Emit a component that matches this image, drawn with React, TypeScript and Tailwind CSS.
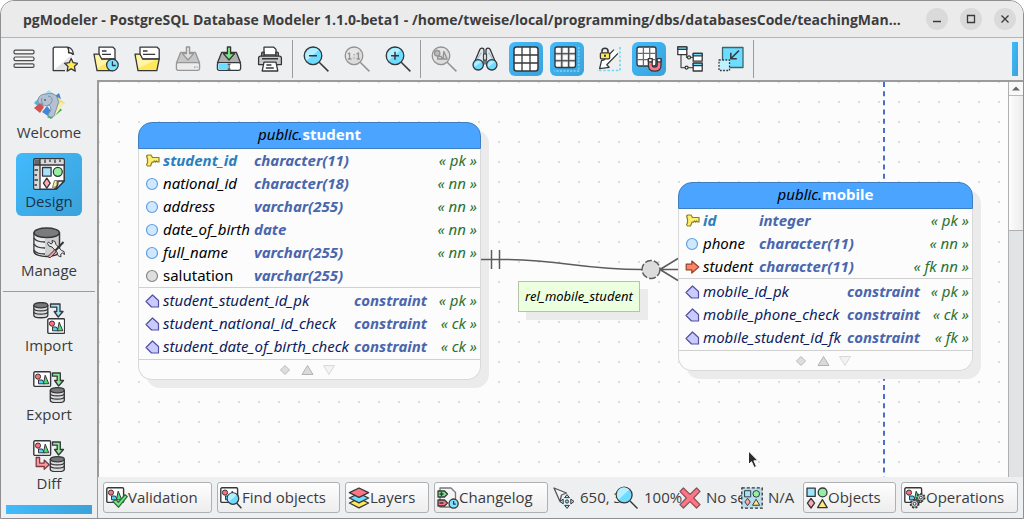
import type { ReactNode } from "react";

const INK = "#35373a";

function Icon({ size, children, className = "" }: { size: number; children: ReactNode; className?: string }) {
  return (
    <svg
      aria-hidden="true"
      width={size}
      height={size}
      viewBox={`0 0 ${size} ${size}`}
      fill="none"
      stroke={INK}
      strokeWidth="1.3"
      strokeLinejoin="round"
      className={`shrink-0 ${className}`}
    >
      {children}
    </svg>
  );
}

/* ---------- shared drawing pieces ---------- */

function ModelCard() {
  return (
    <g>
      <rect x="0.8" y="0.8" width="16.8" height="14.6" rx="1.2" fill="#fff" strokeWidth="1.4" />
      <path d="M5.5 12.8V9h3.8l2.2 3.8z" fill="#4fd2ff" strokeWidth="1" />
      <path d="M10.4 12.8l1.8-8.6 3.6 8.6z" fill="#4be07a" strokeWidth="1" />
      <circle cx="5" cy="5.6" r="2.6" fill="#ff6f7d" strokeWidth="1" />
    </g>
  );
}

function SmallDb() {
  return (
    <g strokeWidth="1.3">
      <path d="M0.8 3v10.2c0 3.4 14 3.4 14 0V3" fill="#dcdcdc" />
      <path d="M0.8 6.4c0 3.2 14 3.2 14 0M0.8 9.8c0 3.2 14 3.2 14 0" />
      <ellipse cx="7.8" cy="3.2" rx="7" ry="2.6" fill="#777" />
    </g>
  );
}

function Gear({ cx, cy, r }: { cx: number; cy: number; r: number }) {
  return (
    <g>
      <circle cx={cx} cy={cy} r={r} fill="#d6d6d6" strokeWidth="2.2" strokeDasharray="1.8 1.4" />
      <circle cx={cx} cy={cy} r={r - 0.4} fill="#d6d6d6" strokeWidth="0.8" />
      <circle cx={cx} cy={cy} r="1.4" fill="#fff" strokeWidth="1" />
    </g>
  );
}

function Lens({ children, muted = false }: { children?: ReactNode; muted?: boolean }) {
  return (
    <g stroke={muted ? "#939393" : INK}>
      <path d="M16.2 16.2L25.4 25.4" strokeWidth="1.5" />
      <circle cx="10" cy="9.8" r="8.8" fill={muted ? "#dcdcdc" : "#6fdcff"} strokeWidth="1.3" />
      <path d="M3.8 14.6A8 8 0 0 1 15.6 4z" fill={muted ? "#e6e6e6" : "#b5efff"} stroke="none" />
      {children}
    </g>
  );
}

function Clock({ cx, cy, r }: { cx: number; cy: number; r: number }) {
  return (
    <g>
      <circle cx={cx} cy={cy} r={r} fill="#80e2ff" strokeWidth="1.3" />
      <path d={`M${cx} ${cy - r + 2}V${cy + 0.5}H${cx + r - 2.4}`} strokeWidth="1.3" />
    </g>
  );
}

function FolderShape({ right }: { right: number }) {
  return (
    <g>
      <path d={`M6 13V1.2h${right - 8}l2 2V13z`} fill="#fff" />
      <path d={`M9 5h4.500M9 8.400h${right - 13}`} />
      <path d={`M4 24.600L1 8.200h5.200l2.600 5H${right}L${right - 2.4} 24.600z`} fill="#ffe85a" />
      <path d={`M4.600 22L2.200 9.200h3.400l2.600 5H${right - 4}z`} fill="#fff4ae" stroke="none" />
    </g>
  );
}

function Drive({ muted = false }: { muted?: boolean }) {
  return (
    <g stroke={muted ? "#979797" : INK}>
      <path d="M1.4 17L5.6 6.4h14.8L24.6 17z" fill={muted ? "#c6c6c6" : "#b0b0b0"} />
      <rect x="1.4" y="16.6" width="23.2" height="7.8" rx="1.8" fill={muted ? "#ececec" : "#fff"} />
      {muted ? (
        <path d="M19 21.2h1.4M21.6 21.2h1" />
      ) : (
        <g>
          <path d="M2.4 18h10v5.4h-10z" fill="#6fdcff" stroke="none" />
          <path d="M11.6 18.2h3M13.1 18.2v5M11.6 23.2h3" strokeWidth="1" />
        </g>
      )}
      <path d="M11.4 1h3.2v6.600h4L13 14 7.400 7.600h4z" fill={muted ? "#dedede" : "#7ce07c"} />
    </g>
  );
}

/* ---------- toolbar icons ---------- */

const menuIcon = (
  <Icon size={26}>
    {[4.2, 11, 17.8].map((y) => (
      <rect key={y} x="3" y={y} width="20" height="3.6" rx="1.4" fill="#f4f4f4" stroke="#4a4a4a" strokeWidth="1.2" />
    ))}
  </Icon>
);

const newIcon = (
  <Icon size={26}>
    <path d="M1 1.2h14.500q6 1.300 6.300 8.400v15.200H1z" fill="#fff" stroke="none" />
    <path d="M2 24L20.500 8v16z" fill="#e3e5e8" stroke="none" />
    <path d="M21.600 8.800Q20.800 2 15.500 1.200H2.200L1.200 2.200V24.600H13M15.500 1.200q2 3.400 1 5.600 3-.4 5 2" />
    <path d="M19.200 12.500l2 4.200 4.600.6-3.400 3.200.9 4.600-4.100-2.200-4.100 2.200.9-4.600-3.400-3.200 4.600-.6z" fill="#ffe85a" />
  </Icon>
);

const recentIcon = (
  <Icon size={26}>
    <FolderShape right={22} />
    <Clock cx={19.4} cy={19} r={5.8} />
  </Icon>
);

const openIcon = (
  <Icon size={26}>
    <FolderShape right={25.2} />
  </Icon>
);

const saveIcon = (
  <Icon size={26}>
    <Drive muted />
  </Icon>
);

const saveAsIcon = (
  <Icon size={26}>
    <Drive />
  </Icon>
);

const printIcon = (
  <Icon size={26}>
    <path d="M7 9V1.200h9.800L19 3.400V9z" fill="#fff" />
    <path d="M4.600 11.400V7.400q0-1.200 1.200-1.200h1.200v5.200M19 11.400V6.200h1.200q1.200 0 1.200 1.200v4" fill="#999" />
    <path d="M1.600 18.600v-6.400q0-2 2-2h18.800q2 0 2 2v6.400z" fill="#c9c9c9" />
    <path d="M5 12.800h16" strokeWidth="1.6" />
    <path d="M7 16.200h12l1.800 8.800H5.200z" fill="#fff" />
    <path d="M9.400 19h5M8.800 22h8" />
  </Icon>
);

const zoomOutIcon = (
  <Icon size={26}>
    <Lens>
      <path d="M6 9.800h8" strokeWidth="1.5" />
    </Lens>
  </Icon>
);

const zoomResetIcon = (
  <Icon size={26}>
    <Lens muted>
      <path d="M3.800 8l1.800-1v6M3.800 13h3.600M12.600 8l1.800-1v6M12.600 13h3.400M10 8.300v1M10 11.600v1" />
    </Lens>
  </Icon>
);

const zoomInIcon = (
  <Icon size={26}>
    <Lens>
      <path d="M6 9.800h8M10 5.800v8" strokeWidth="1.5" />
    </Lens>
  </Icon>
);

const zoomObjectsIcon = (
  <Icon size={26}>
    <Lens muted>
      <circle cx="6.2" cy="7.2" r="2.7" fill="#bdbdbd" />
      <path d="M6.600 13V10.400h3.400l1.600 2.600zM12 13l.8-7.600 3.400 7.600z" fill="#d2d2d2" />
    </Lens>
  </Icon>
);

const binocularsIcon = (
  <Icon size={26}>
    <path d="M2 17.500L7.400 4.600q.6-2.400 2.600-2.400 2 0 2 2.400v14M24 17.500L18.600 4.600q-.6-2.400-2.600-2.400-2 0-2 2.400v14" fill="#dfeaee" />
    <path d="M11.400 8h3.200v6h-3.200z" fill="#cfdde2" strokeWidth="1" />
    <path d="M4.500 14l5-7.500M21.500 14l-5-7.500" stroke="#aebbc0" />
    <circle cx="6.2" cy="18.8" r="5.2" fill="#6fdcff" />
    <circle cx="19.8" cy="18.8" r="5.2" fill="#6fdcff" />
    <path d="M2.600 21a4.300 4.300 0 0 1 6.600-5zM16.200 21a4.300 4.300 0 0 1 6.600-5z" fill="#b5efff" stroke="none" />
  </Icon>
);

const gridIcon = (
  <Icon size={26}>
    <rect x="1" y="1" width="24" height="24" rx="2.5" fill="#fff" strokeWidth="1.5" />
    <path d="M9 1v24M17 1v24M1 9h24M1 17h24" />
  </Icon>
);

const pageLimitsIcon = (
  <Icon size={26}>
    <rect x="1" y="1" width="20.5" height="20.5" rx="2" fill="#fff" stroke="none" />
    <path d="M7.800 1v20.500M14.700 1v20.500M1 7.800h20.500M1 14.700h20.500" stroke="#d0d0d0" strokeWidth="3" />
    <path d="M7.800 1v20.500M14.700 1v20.500M1 7.800h20.500M1 14.700h20.500" strokeWidth="1.1" />
    <rect x="1" y="1" width="20.5" height="20.5" rx="2" strokeWidth="1.4" />
    <path d="M24.800 1v24H.5" stroke="#7fd6fb" strokeDasharray="2 1.4" />
  </Icon>
);

const lockLimitsIcon = (
  <Icon size={26}>
    <path d="M25 1v23.500H2" stroke="#70d6f5" strokeWidth="1.6" strokeDasharray="2.4 1.8" />
    <path d="M19 3.600L8.800 14l-2.200.4-2 8.200 9.600-1.200-2.400-2.600L23 7.400" fill="#fff" />
    <path d="M7 7.400V5q0-2.800 3-2.800T13 5v2.400" strokeWidth="1.6" />
    <rect x="5.4" y="6.8" width="9.2" height="6" rx="1" fill="#ffe85a" />
    <path d="M9 8.800h2v2H9z" fill={INK} stroke="none" />
  </Icon>
);

const snapIcon = (
  <Icon size={26}>
    <rect x="1" y="1" width="19" height="19" rx="2" fill="#fff" strokeWidth="1.4" />
    <path d="M7.400 1v19M13.700 1v19M1 7.400h19M1 13.700h19" stroke="#6b6b6b" />
    <path d="M12.400 13v6.200q0 6 6.300 6t6.300-6V13h-3.800v5.800q0 2.400-2.500 2.400t-2.500-2.400V13z" fill="#ff7583" />
    <path d="M12.400 12.600h3.800v3.200h-3.800zM21.200 12.600H25v3.200h-3.800z" fill="#fff" />
  </Icon>
);

const treeIcon = (
  <Icon size={26}>
    <path d="M4 8v13.600h12M9.600 7v4.400H16" stroke="#555" />
    <circle cx="12" cy="11.4" r="1.5" fill="#fff" />
    <circle cx="9.6" cy="21.6" r="1.5" fill="#fff" />
    {[
      [0.8, 0.9],
      [16.2, 7.4],
      [16.2, 17.2],
    ].map(([x, y]) => (
      <g key={`${x}-${y}`}>
        <rect x={x} y={y} width="9" height="7.8" fill="#fff" />
        <path d={`M${x} ${y}h9v2.400h-9z`} fill="#6fdcff" />
      </g>
    ))}
  </Icon>
);

const compactIcon = (
  <Icon size={26}>
    <rect x="4.5" y="1.5" width="20.5" height="20" fill="#6cdcff" stroke="#3c6470" />
    <rect x="1" y="14" width="10.5" height="10.5" fill="#c0f1ff" strokeDasharray="1.8 1.4" />
    <path d="M21 4.500L13 12.500M12.800 6.800v5.900h6" strokeWidth="1.5" />
  </Icon>
);

/* ---------- sidebar icons ---------- */

const welcomeIcon = (
  <Icon size={32}>
    <g stroke="none">
      <path d="M16 1l7 6-7 6-7-6z" fill="#a9dcef" />
      <path d="M1 14l6-6 6 6-6 5z" fill="#4bb6dd" />
      <path d="M1 19l6-5 4 4-4 6z" fill="#d1534d" />
      <path d="M22 6l5 4 5 4-9 9z" fill="#f2dd75" />
      <path d="M22 7l4-3 2 6z" fill="#3e86d8" />
      <path d="M9 23l5-6 5 6-4 4z" fill="#4285dc" />
      <path d="M14 28l11-11 4 4-11 9z" fill="#36b44b" />
      <path d="M17 26l11-13 3 2-10 13z" fill="#f4edb5" />
    </g>
    <path
      d="M5 11q1-6 8-6 8-2 11 3 3 5 0 10l-2 6q-1 5-5 4-3-1-1-4l2-3q0-4-2-5-5 2-7-1-5 0-4-4z"
      fill="#b3c2d3"
      stroke="#8192a6"
      strokeWidth="1"
    />
    <path d="M15 7q5 1 4 5t-5 5M9 9q-2 3 1 6" stroke="#8192a6" strokeWidth="1" />
    <circle cx="12" cy="11" r="0.9" fill="#4a5a6c" stroke="none" />
  </Icon>
);

const designIcon = (
  <Icon size={32}>
    <path d="M2 .8h28q1.200 0 1.200 1.200v21l-8 8.200H2Q.8 31.200.8 30V2Q.8.8 2 .8z" fill="#fff" strokeWidth="1.5" />
    <path d="M7 1.500h23.500V7H7zM1.500 7H7v23.500H1.500z" fill="#d9d9d9" stroke="none" />
    <path d="M1.500 1.500H7V7H1.500z" fill="#666" stroke="none" />
    <path d="M7 1v30M1 7h30M12 1.500V5M17 1.500V4M22 1.500V5M27 1.500V4M1.500 12H5M1.500 17H4M1.500 22H5M1.500 27H4" />
    <rect x="9.5" y="9.5" width="8.6" height="8.6" fill="#a9e3fb" />
    <circle cx="24.8" cy="13.8" r="4.5" fill="#96efa0" />
    <path d="M13.800 20.200l3.400 5-3.400 5-3.400-5z" fill="#ffa9b3" />
    <path d="M19.500 29.500l2-7h2.500v6z" fill="#ffef87" stroke="#777" strokeWidth="1" />
    <path d="M31.200 23h-6.400q1 5-3.600 8.200h2z" fill="#eee" />
  </Icon>
);

const manageIcon = (
  <Icon size={32}>
    <path d="M1 5.500v19c0 6.500 25.500 6.500 25.500 0v-19" fill="#cfcfcf" strokeWidth="1.5" />
    <path d="M1.700 7v17q2 4 10.300 4.600V11Q3 10 1.700 7z" fill="#ececec" stroke="none" />
    <path d="M1 11q2 4 11 4M1 17q2 4 11 4M1 23q2 4 11 4" />
    <ellipse cx="13.7" cy="5.8" rx="12.7" ry="4.8" fill="#7b7b7b" strokeWidth="1.5" />
    <path d="M16 19l-1.500-2.500 1-1.500 2.500 2 1.500-1-.5-2.500q4 0 4 4l5.500 6q3.500 0 3 4l-2-1.500-1.800 1.300.3 2.500q-4-.5-3.600-4L19 20z" fill="#e9e9e9" strokeWidth="1" />
    <path d="M30.500 15l-9.500 10" strokeWidth="2" />
    <path d="M21.500 23l1.700 1.600-5.600 5.800q-2.200.8-2.600-1z" fill="#ff9aa4" strokeWidth="1" />
  </Icon>
);

const importIcon = (
  <Icon size={32}>
    <SmallDb />
    <path d="M17.500 2h9.500v7.500h3L25.200 15l-4-5.500h2.600V5.200h-6.300z" fill="#9fe2fb" />
    <g transform="translate(14 16)">
      <ModelCard />
    </g>
  </Icon>
);

const exportIcon = (
  <Icon size={32}>
    <ModelCard />
    <path d="M19.500 2h7.800v7.500h3.200L25.600 15l-4-5.500h2.600V5.200h-4.700z" fill="#8bea93" />
    <g transform="translate(16.500 16)">
      <SmallDb />
    </g>
  </Icon>
);

const diffIcon = (
  <Icon size={32}>
    <ModelCard />
    <path d="M19.500 2h7.800v7.500h3.200L25.600 15l-4-5.500h2.600V5.200h-4.700z" fill="#8bea93" />
    <path d="M3.200 17.500h3.400v5.600h4.600v-3l5 4.600-5 4.600v-2.800h-8z" fill="#ff98a2" stroke="#7e3b42" />
    <g transform="translate(16.500 16)">
      <SmallDb />
    </g>
  </Icon>
);

/* ---------- status bar icons ---------- */

const validationIcon = (
  <Icon size={22}>
    <ModelCard />
    <path d="M7 14.600l2.600-2 2.800 2.600 6.600-7.400 2.200 1.800-8.600 10.600z" fill="#7be68a" stroke="#2c6e38" />
  </Icon>
);

const findIcon = (
  <Icon size={22}>
    <ModelCard />
    <path d="M16.600 16L21.400 21.200" strokeWidth="1.5" />
    <circle cx="13" cy="11.6" r="5.7" fill="#6fdcff" />
    <path d="M9 14.800A5 5 0 0 1 16.600 8z" fill="#b5efff" stroke="none" />
  </Icon>
);

const layersIcon = (
  <Icon size={22}>
    <path d="M1.400 16L11 20.800 20.600 16 11 11.400z" fill="#ffe85a" />
    <path d="M1.400 11L11 15.800 20.600 11 11 6.400z" fill="#6fdcff" />
    <path d="M1.400 5.600L11 10.400 20.600 5.600 11 1z" fill="#ff7583" />
  </Icon>
);

const changelogIcon = (
  <Icon size={22}>
    <path d="M3 1h11l4.500 4.500V20H3z" fill="#f4f4f4" stroke="#777" />
    <path d="M1 4h6.500l3 3-3 3H1z" fill="#7be68a" />
    <path d="M1 13h6.500l3 3-3 3H1z" fill="#ff7583" />
    <path d="M2.500 7h4M4.500 5v4M2.500 16h4" />
    <Clock cx={16.6} cy={16.6} r={4.6} />
  </Icon>
);

const positionIcon = (
  <Icon size={22}>
    <path d="M1 1l12.500 5-5 2-1.500 6.500z" fill="#f4f4f4" stroke="#555" />
    <path d="M14 7.600l2.400 3h-4.800zM14 21.400l2.400-3h-4.800zM7 14.500l3.200-2.400v4.800zM21 14.500l-3.200-2.400v4.800z" fill="#a3e4fb" strokeWidth="1" />
    <circle cx="14" cy="14.5" r="1.6" fill="#6fdcff" strokeWidth="1" />
  </Icon>
);

const lensIcon = (
  <Icon size={24}>
    <path d="M15 15L22.500 22.500" strokeWidth="1.4" />
    <circle cx="9.2" cy="9" r="7.9" fill="#6fdcff" />
    <path d="M3.600 13.400A7 7 0 0 1 14.200 3.700z" fill="#b5efff" stroke="none" />
  </Icon>
);

const crossIcon = (
  <Icon size={22}>
    <path
      d="M4.400 1L11 7.400 17.600 1 21 4.400 14.600 11l6.400 6.600-3.400 3.400L11 14.600 4.400 21 1 17.600 7.400 11 1 4.400z"
      fill="#ff7583"
      stroke="#84545a"
    />
  </Icon>
);

function BasicShapes() {
  return (
    <g>
      <rect x="1" y="1.2" width="8.2" height="8.2" fill="#9be6fb" />
      <circle cx="16.6" cy="5.4" r="4.4" fill="#96efa0" />
      <path d="M5 11.400l3.600 4.800L5 21l-3.600-4.800z" fill="#ffa9b3" />
      <path d="M16.400 12.600l4.800 8h-9.600z" fill="#ffe97a" />
    </g>
  );
}

const objectsIcon = (
  <Icon size={22}>
    <BasicShapes />
  </Icon>
);

const selectionIcon = (
  <Icon size={22}>
    <rect x="0.8" y="0.8" width="20.4" height="20.4" fill="#b9ddec" stroke="#333" strokeDasharray="3 2" />
    <g transform="translate(2.800 2.800) scale(.75)">
      <BasicShapes />
    </g>
  </Icon>
);

const operationsIcon = (
  <Icon size={22}>
    <ModelCard />
    <Gear cx={16.8} cy={10.6} r={3.6} />
    <Gear cx={10.6} cy={16.8} r={3.8} />
  </Icon>
);

/* ---------- window chrome ---------- */

function TitleBar() {
  const controls: { label: string; glyph: ReactNode }[] = [
    { label: "Minimize", glyph: <path d="M7 13.500h8" /> },
    { label: "Maximize", glyph: <path d="M7.500 7.500h7v7h-7z" /> },
    { label: "Close", glyph: <path d="M7.500 7.500l7 7M14.500 7.500l-7 7" /> },
  ];
  return (
    <header className="flex h-[37px] shrink-0 items-center border-b border-[#b4b4b4] bg-[#ebebeb] pr-[7px] pl-[22px]">
      <h1 className="min-w-0 flex-1 overflow-hidden text-[14px] font-bold whitespace-nowrap text-[#3d3d3d]">
        pgModeler - PostgreSQL Database Modeler 1.1.0-beta1 - /home/tweise/local/programming/dbs/databasesCode/teachingMan…
      </h1>
      <div className="flex gap-3">
        {controls.map((c) => (
          <button key={c.label} type="button" aria-label={c.label} className="size-[22px] rounded-full bg-[#dadada]">
            <svg width="22" height="22" viewBox="0 0 22 22" fill="none" stroke="#3a3a3a" strokeWidth="1.3">
              {c.glyph}
            </svg>
          </button>
        ))}
      </div>
    </header>
  );
}

type Tool = { label: string; icon: ReactNode; active?: boolean; disabled?: boolean };

const toolGroups: Tool[][] = [
  [
    { label: "Main menu", icon: menuIcon },
    { label: "New", icon: newIcon },
    { label: "Recent models", icon: recentIcon },
    { label: "Open", icon: openIcon },
    { label: "Save", icon: saveIcon, disabled: true },
    { label: "Save as", icon: saveAsIcon },
    { label: "Print", icon: printIcon },
  ],
  [
    { label: "Zoom out", icon: zoomOutIcon },
    { label: "Normal zoom", icon: zoomResetIcon, disabled: true },
    { label: "Zoom in", icon: zoomInIcon },
  ],
  [
    { label: "Magnifier", icon: zoomObjectsIcon, disabled: true },
    { label: "Overview", icon: binocularsIcon },
    { label: "Show grid", icon: gridIcon, active: true },
    { label: "Show delimiters", icon: pageLimitsIcon, active: true },
    { label: "Lock delimiters", icon: lockLimitsIcon },
    { label: "Align to grid", icon: snapIcon, active: true },
    { label: "Arrange objects", icon: treeIcon },
    { label: "Compact view", icon: compactIcon },
  ],
];

function Toolbar() {
  return (
    <div role="toolbar" aria-label="Main tools" className="flex h-[42px] shrink-0 items-center pr-[5px] pl-[6px]">
      {toolGroups.map((group, i) => (
        <div key={i} className="flex items-center">
          <div className="flex gap-[7px]">
            {group.map((t) => (
              <button
                key={t.label}
                type="button"
                aria-label={t.label}
                disabled={t.disabled}
                className={
                  t.active
                    ? "flex size-[34px] items-center justify-center rounded-md bg-linear-to-br from-[#41bbfd] to-[#3ba2da]"
                    : "flex size-[34px] items-center justify-center"
                }
              >
                {t.icon}
              </button>
            ))}
          </div>
          <div className="mr-[6px] ml-[5px] h-[38px] w-px bg-[#9b9b9d]" />
        </div>
      ))}
      <div className="ml-auto h-[34px] w-[6px] bg-linear-to-br from-[#41bbfd] to-[#3ba2da]" />
    </div>
  );
}

const views = [
  { label: "Welcome", icon: welcomeIcon },
  { label: "Design", icon: designIcon, active: true },
  { label: "Manage", icon: manageIcon, last: true },
  { label: "Import", icon: importIcon },
  { label: "Export", icon: exportIcon },
  { label: "Diff", icon: diffIcon },
];

function Sidebar() {
  return (
    <nav aria-label="Views" className="flex w-[97px] shrink-0 flex-col items-center gap-[6px] border-r border-[#9b9b9d] pt-[4px]">
      {views.map((v) => (
        <div key={v.label} className="contents">
          <button
            type="button"
            aria-pressed={!!v.active}
            className={
              v.active
                ? "flex h-[63px] w-[66px] flex-col items-center gap-px rounded-md bg-linear-to-br from-[#41bbfd] to-[#3ba2da] pt-[5px] text-[15px] leading-[20px] text-[#17344a]"
                : "flex h-[63px] w-[66px] flex-col items-center gap-px pt-[5px] text-[15px] leading-[20px] text-[#3a3b3d]"
            }
          >
            {v.icon}
            {v.label}
          </button>
          {v.last && <div className="-mb-px h-px w-[92px] bg-[#9b9b9d]" />}
        </div>
      ))}
      <div className="mt-px h-[9px] w-[86px] bg-linear-to-r from-[#41bbfd] to-[#3ba2da]" />
    </nav>
  );
}

/* ---------- diagram ---------- */

type Kind = "pk" | "nn" | "null" | "fk" | "constraint";

function Marker({ kind }: { kind: Kind }) {
  return (
    <svg aria-hidden="true" width="16" height="14" viewBox="0 0 16 14" strokeLinejoin="round" strokeWidth="1.2" className="block">
      {kind === "pk" && (
        <path d="M1.500 2l1.500-1h3l1.500 2.500H14v4.500h-1.500l-1-1-1 1.200-1-1.200-1 1.200H7L5.500 12H2.500L1.500 10.500l1-1.500V5z" fill="#ffef6e" stroke="#8d7d24" />
      )}
      {kind === "nn" && <circle cx="7" cy="7" r="5.5" fill="#cfe7ff" stroke="#5f9fe2" />}
      {kind === "null" && <circle cx="7" cy="7" r="5.5" fill="#dedede" stroke="#858585" />}
      {kind === "fk" && <path d="M1.200 4.200h5.600V1l7 6-7 6V9.800H1.200z" fill="#ff8562" stroke="#93402c" />}
      {kind === "constraint" && <path d="M1 7.500L7.500 1l6 5.500V13H6.500z" fill="#c9cbff" stroke="#5350a0" />}
    </svg>
  );
}

type Row = { kind: Kind; name: string; type: string; flags: string };

const nameStyle: Record<Kind, string> = {
  pk: "font-bold italic text-[#2a80bd]",
  nn: "italic text-black",
  null: "text-black",
  fk: "italic text-black",
  constraint: "italic text-[#0c1c60]",
};

function Rows({ rows, nameCol, label }: { rows: Row[]; nameCol: string; label: string }) {
  return (
    <table aria-label={label} className="w-full table-fixed border-collapse whitespace-nowrap">
      <colgroup>
        <col className="w-[24px]" />
        <col className={nameCol} />
        <col />
        <col className="w-[64px]" />
      </colgroup>
      <tbody>
        {rows.map((r) => (
          <tr key={r.name} className="h-[23px]">
            <td className="p-0 pl-[6px]">
              <Marker kind={r.kind} />
            </td>
            <td className={`p-0 ${nameStyle[r.kind]}`}>{r.name}</td>
            <td className="p-0 font-bold text-[#4a66ac] italic">{r.type}</td>
            <td className="p-0 pr-[3px] text-right text-[#2a7230] italic">{r.flags}</td>
          </tr>
        ))}
      </tbody>
    </table>
  );
}

type EntityProps = {
  name: string;
  place: string;
  columns: Row[];
  constraints: Row[];
  columnWidth: string;
  constraintWidth: string;
};

function Entity({ name, place, columns, constraints, columnWidth, constraintWidth }: EntityProps) {
  return (
    <section
      aria-label={name}
      className={`absolute rounded-[14px] bg-[#fcfcfc] text-[15px] leading-[23px] shadow-[8px_8px_0_#ebebeb] ${place}`}
    >
      <h2 className="h-[27px] rounded-t-[14px] border border-[#3f7fbf] bg-[#4ba4ff] text-center font-normal">
        <span className="text-black italic">public.</span>
        <span className="font-bold text-white">{name}</span>
      </h2>
      <div className="rounded-b-[14px] border border-t-0 border-[#d9d9d9]">
        <Rows rows={columns} nameCol={columnWidth} label={`${name} columns`} />
        <div className="border-y border-[#d0d0d0] py-px">
          <Rows rows={constraints} nameCol={constraintWidth} label={`${name} constraints`} />
        </div>
        <div className="flex h-[19px] items-center justify-center pr-[6px]">
          <svg aria-hidden="true" width="56" height="12" viewBox="0 0 56 12" strokeWidth="1">
            <path d="M6 1.500L10.500 6 6 10.500 1.500 6z" fill="#dedede" stroke="#b9b9b9" />
            <path d="M28.500 1.500L34 10.500H23z" fill="#dadada" stroke="#b3b3b3" />
            <path d="M50 10.500L55.500 1.500h-11z" fill="#f3f3f3" stroke="#d9d9d9" />
          </svg>
        </div>
      </div>
    </section>
  );
}

const studentColumns: Row[] = [
  { kind: "pk", name: "student_id", type: "character(11)", flags: "« pk »" },
  { kind: "nn", name: "national_id", type: "character(18)", flags: "« nn »" },
  { kind: "nn", name: "address", type: "varchar(255)", flags: "« nn »" },
  { kind: "nn", name: "date_of_birth", type: "date", flags: "« nn »" },
  { kind: "nn", name: "full_name", type: "varchar(255)", flags: "« nn »" },
  { kind: "null", name: "salutation", type: "varchar(255)", flags: "" },
];

const studentConstraints: Row[] = [
  { kind: "constraint", name: "student_student_id_pk", type: "constraint", flags: "« pk »" },
  { kind: "constraint", name: "student_national_id_check", type: "constraint", flags: "« ck »" },
  { kind: "constraint", name: "student_date_of_birth_check", type: "constraint", flags: "« ck »" },
];

const mobileColumns: Row[] = [
  { kind: "pk", name: "id", type: "integer", flags: "« pk »" },
  { kind: "nn", name: "phone", type: "character(11)", flags: "« nn »" },
  { kind: "fk", name: "student", type: "character(11)", flags: "« fk nn »" },
];

const mobileConstraints: Row[] = [
  { kind: "constraint", name: "mobile_id_pk", type: "constraint", flags: "« pk »" },
  { kind: "constraint", name: "mobile_phone_check", type: "constraint", flags: "« ck »" },
  { kind: "constraint", name: "mobile_student_id_fk", type: "constraint", flags: "« fk »" },
];

function Canvas() {
  return (
    <main className="relative min-w-0 flex-1 overflow-hidden border-l border-[#9b9b9d] bg-[#fcfcfc] bg-[conic-gradient(at_2px_2px,transparent_75%,#dedede_0)] bg-size-[20px_20px] bg-position-[-1px_-1px] font-['Noto_Sans',sans-serif]">
      <svg aria-hidden="true" className="absolute inset-0 size-full" fill="none">
        <path d="M785 0V800" stroke="#4a6fc8" strokeWidth="2" strokeDasharray="5 4.18" />
      </svg>
      <Entity
        name="student"
        place="top-[40px] left-[39px] w-[343px]"
        columns={studentColumns}
        constraints={studentConstraints}
        columnWidth="w-[91px]"
        constraintWidth="w-[191px]"
      />
      <Entity
        name="mobile"
        place="top-[100px] left-[579px] w-[295px]"
        columns={mobileColumns}
        constraints={mobileConstraints}
        columnWidth="w-[56px]"
        constraintWidth="w-[144px]"
      />
      <svg aria-hidden="true" className="pointer-events-none absolute inset-0 size-full" fill="none" stroke="#5c5c5c" strokeWidth="1.5">
        <path d="M382 177.500h20C464 177.500 480 187.500 543 187.500M392.500 168v19M400.500 168v19" />
        <path d="M561 187.500L579 176.500M561 187.500h18M561 187.500L579 198.500" />
        <circle cx="552" cy="187.5" r="9" fill="#dcdcdc" strokeDasharray="7 2" />
      </svg>
      <div className="absolute top-[199px] left-[419px] border border-[#b5c4a6] bg-[#ecffdf] px-[6px] py-[5px] text-[13px] leading-[19px] text-black italic shadow-[8px_8px_0_#ebebeb]">
        rel_mobile_student
      </div>
      <svg aria-hidden="true" className="absolute top-[368px] left-[648px]" width="14" height="20" viewBox="0 0 14 20">
        <path d="M1.500 1v13.500l3-2.800 2.600 5.800 2.400-1.100-2.600-5.600h4.200z" fill="#2c2c2c" stroke="#fff" strokeWidth="1" />
      </svg>
    </main>
  );
}

function ScrollBar() {
  return (
    <div className="flex w-[15px] shrink-0 flex-col border-l border-[#b0b0b0] bg-[#e2e3e4]">
      <button type="button" aria-label="Scroll up" className="flex h-[14px] items-center justify-center border-b border-[#b8b8b8] bg-[#f8f8f8]">
        <svg width="8" height="5" viewBox="0 0 8 5">
          <path d="M4 0.500L8 4.500H0z" fill="#666" />
        </svg>
      </button>
      <div className="h-[135px] border-b border-[#b0b0b0] bg-linear-to-r from-[#fdfdfd] to-[#ececec]" />
    </div>
  );
}

function StatusButton({ icon, width, children }: { icon: ReactNode; width: string; children: ReactNode }) {
  return (
    <button
      type="button"
      className={`flex h-[31px] shrink-0 items-center rounded-[3px] border border-[#aeb0b2] bg-linear-to-b from-[#fefefe] to-[#ededee] pl-[2px] whitespace-nowrap ${width}`}
    >
      {icon}
      {children}
    </button>
  );
}

function StatusItem({ icon, width, children }: { icon: ReactNode; width: string; children: ReactNode }) {
  return (
    <div className={`flex shrink-0 items-center gap-[5px] whitespace-nowrap ${width}`}>
      {icon}
      <span>{children}</span>
    </div>
  );
}

function StatusBar() {
  return (
    <footer className="flex h-[41px] shrink-0 items-center gap-[5px] px-[5px] text-[15px] text-[#3a3b3d]">
      <StatusButton icon={validationIcon} width="w-[109px]">Validation</StatusButton>
      <StatusButton icon={findIcon} width="w-[123px]">Find objects</StatusButton>
      <StatusButton icon={layersIcon} width="w-[84px]">Layers</StatusButton>
      <StatusButton icon={changelogIcon} width="w-[114px]">Changelog</StatusButton>
      <div className="flex">
        <StatusItem icon={positionIcon} width="w-[62px]">650, 3</StatusItem>
        <StatusItem icon={lensIcon} width="w-[64px]">100%</StatusItem>
        <StatusItem icon={crossIcon} width="w-[62px]">No se</StatusItem>
        <StatusItem icon={selectionIcon} width="w-[54px]">N/A</StatusItem>
      </div>
      <div className="ml-auto flex gap-[5px]">
        <StatusButton icon={objectsIcon} width="w-[93px]">Objects</StatusButton>
        <StatusButton icon={operationsIcon} width="w-[117px]">Operations</StatusButton>
      </div>
    </footer>
  );
}

export default function App() {
  return (
    <div className="h-screen bg-white">
      <div className="flex h-full flex-col overflow-hidden rounded-t-[14px] border border-[#8f8f91] bg-[#eeeff1] font-['Open_Sans',sans-serif]">
        <TitleBar />
        <Toolbar />
        <div className="flex min-h-0 flex-1">
          <Sidebar />
          <div className="flex min-w-0 flex-1 flex-col border-t-2 border-[#9b9b9d]">
            <div className="flex min-h-0 flex-1">
              <Canvas />
              <ScrollBar />
            </div>
            <StatusBar />
          </div>
        </div>
      </div>
    </div>
  );
}
